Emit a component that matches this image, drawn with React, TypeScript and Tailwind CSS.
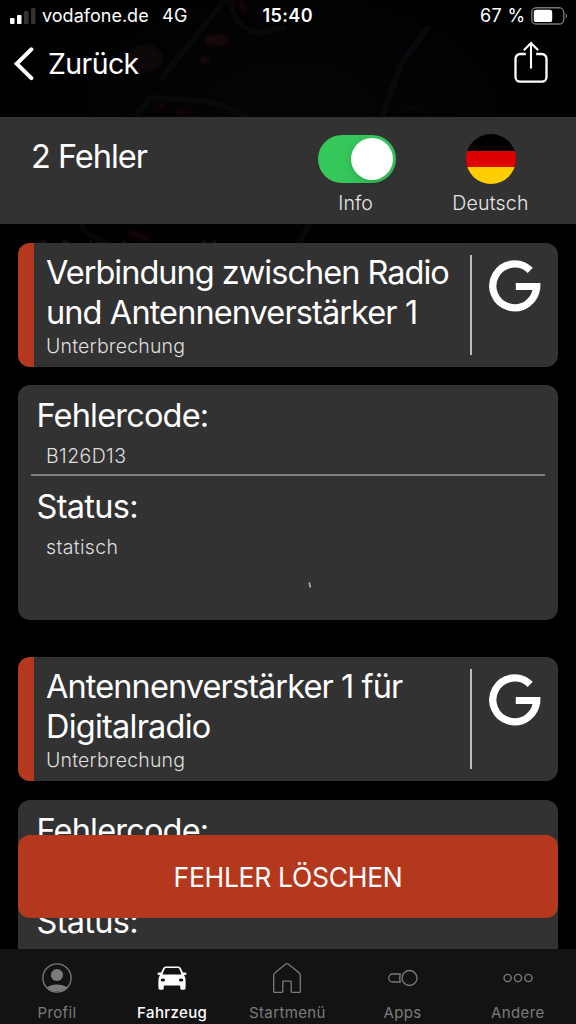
import type { ReactNode } from "react";

function Backdrop() {
  return (
    <svg className="absolute inset-0 h-[385px] w-full opacity-65" viewBox="0 0 576 385" fill="none" aria-hidden="true">
      <defs>
        <filter id="soft" x="-20%" y="-20%" width="140%" height="140%">
          <feGaussianBlur stdDeviation="2.6" />
        </filter>
        <radialGradient id="glow" cx="0.5" cy="0.5" r="0.5">
          <stop offset="0" stopColor="#08090b" />
          <stop offset="1" stopColor="#000000" />
        </radialGradient>
      </defs>
      <ellipse cx="290" cy="110" rx="340" ry="190" fill="url(#glow)" />
      <g filter="url(#soft)">
        <path d="M225 0L160 80" stroke="#121315" strokeWidth="4" />
        <path d="M136 117L150 97L212 102L250 117" stroke="#17181a" strokeWidth="3" />
        <path d="M230 0Q236 32 262 33L288 26" stroke="#141416" strokeWidth="3" />
        <path d="M430 25L402 62L382 117" stroke="#0f1013" strokeWidth="6" />
        <ellipse cx="146" cy="58" rx="17" ry="14" fill="#120b0d" />
        <ellipse cx="217" cy="40" rx="13" ry="6" fill="#26080d" />
        <ellipse cx="205" cy="60" rx="7" ry="4" fill="#1a070a" />
        <path d="M240 0L245 12" stroke="#2a080d" strokeWidth="5" />
        <path d="M155 105L167 107M179 111L190 114" stroke="#2a080b" strokeWidth="4" />
        <path d="M80 224Q90 240 110 243M310 224L298 243" stroke="#121315" strokeWidth="4" />
        <path d="M127 232L150 239" stroke="#22080d" strokeWidth="6" />
      </g>
      <path d="M396 117C400 104 424 104 430 117" stroke="#210a0d" />
      <path d="M39 242h7M62 242h7M90 242h2M123 242h3M202 242h3M213 242h3" stroke="#1b1b1c" strokeWidth="3" />
    </svg>
  );
}

function StatusBar() {
  return (
    <div className="flex h-8 items-center text-[18px] leading-8">
      <svg className="ml-[10px]" width="26" height="16" viewBox="0 0 26 16" fill="#fff">
        <rect x="0" y="10" width="4.5" height="6" rx="1" />
        <rect x="7" y="7" width="4.5" height="9" rx="1" />
        <rect x="14" y="3" width="4.5" height="13" rx="1" fill="#333334" />
        <rect x="21" y="0" width="4.5" height="16" rx="1" fill="#333334" />
      </svg>
      <span className="ml-[6px] w-[120px] tracking-[0.02px]">vodafone.de</span>
      <span className="w-[100.5px] tracking-[0.4px]">4G</span>
      <span className="w-[217.5px] font-semibold tracking-[0.4px]">15:40</span>
      <span className="w-[50.5px] whitespace-nowrap tracking-[0.4px]">67 %</span>
      <svg width="37" height="18" viewBox="0 0 37 18" fill="none">
        <rect x="0.8" y="0.8" width="32" height="16.2" rx="4.6" stroke="#767678" strokeWidth="1.4" />
        <rect x="2.8" y="2.8" width="18.4" height="12.2" rx="2.6" fill="#fff" />
        <path d="M34.8 6.3v5.4c1.8-.7 1.8-4.7 0-5.4" fill="#767678" />
      </svg>
    </div>
  );
}

function TitleBar() {
  return (
    <div className="flex h-[85px] items-start">
      <svg className="ml-[13px] mt-[15px]" width="22" height="34" viewBox="0 0 22 34" fill="none">
        <path d="M18.4 2.3L3.7 16.7L18.4 31.1" stroke="#fff" strokeWidth="4" strokeLinecap="round" strokeLinejoin="miter" />
      </svg>
      <span className="ml-[13px] mt-[12px] text-[28.5px] leading-10 tracking-[-0.62px]">Zurück</span>
      <svg className="ml-auto mr-[27px] mt-[9px]" width="36" height="44" viewBox="0 0 36 44" fill="none" stroke="#fff">
        <path d="M12.8 13H7.2a4.7 4.7 0 0 0-4.7 4.7v18.3a4.7 4.7 0 0 0 4.7 4.7h21.6a4.7 4.7 0 0 0 4.7-4.7V17.700a4.7 4.7 0 0 0-4.7-4.7h-5.6" strokeWidth="2.3" />
        <path d="M18 27.5V2.3M10.8 9.3L18 1.9L25.2 9.3" strokeWidth="2.1" />
      </svg>
    </div>
  );
}

function FilterBar() {
  return (
    <div className="flex h-[107px] bg-[#323232]">
      <h1 className="ml-[31px] mt-[20px] w-[287px] text-[32.5px] leading-10 tracking-[-1.03px]">2 Fehler</h1>
      <div className="mt-[18px] flex w-[78px] flex-col items-center">
        <button className="flex h-12 w-[78px] items-center justify-end rounded-full bg-[#35c75a] pr-[3px]" aria-label="Info">
          <span className="h-[42px] w-[42px] rounded-full bg-white shadow-[0_3px_8px_rgba(0,0,0,0.15)]" />
        </button>
        <span className="mt-[8px] -translate-x-[1.5px] text-[19.5px] font-light leading-6 text-[#e8e8e8]">Info</span>
      </div>
      <div className="ml-[44px] mt-[17px] flex w-[101px] flex-col items-center">
        <div className="flex h-[50px] w-[50px] flex-col overflow-hidden rounded-full">
          <div className="h-[17px] bg-black" />
          <div className="h-[16px] bg-[#dd0000]" />
          <div className="flex-1 bg-[#ffce00]" />
        </div>
        <span className="mt-[7px] text-[19.5px] font-light leading-6 tracking-[0.2px] text-[#e8e8e8]">Deutsch</span>
      </div>
    </div>
  );
}

function FaultCard({ children }: { children: ReactNode }) {
  return (
    <section className="mx-[18px] flex h-[124px] shrink-0 overflow-hidden rounded-[12px] bg-[#323232]">
      <div className="w-[16px] bg-[#b4381d]" />
      <div className="w-[436px] whitespace-nowrap pl-[12px] pt-[10px]">
        <h2 className="text-[32.5px] leading-10">{children}</h2>
        <p className="mt-px text-[19.5px] font-light leading-6 tracking-[0.18px] text-[#dedede]">Unterbrechung</p>
      </div>
      <div className="mt-[12px] h-[100px] w-[1.5px] bg-[#bdbdbd]" />
      <svg className="ml-[17.5px] mt-[17px] overflow-visible" width="52" height="52" viewBox="0 0 52 52" fill="none" stroke="#fff">
        <path d="M41.200 10.400A21.900 21.900 0 1 0 47.600 26V23" strokeWidth="7.300" />
        <path d="M26.800 26.500H51.200" strokeWidth="7" />
      </svg>
    </section>
  );
}

function DetailCard({ code, status }: { code?: string; status?: string }) {
  return (
    <section className="relative mx-[18px] h-[235px] shrink-0 rounded-[12px] bg-[#323232] pt-[10.5px]">
      <h3 className="ml-[18.5px] text-[32.5px] leading-[39px] tracking-[-0.82px]">Fehlercode:</h3>
      <p className="ml-[28px] mt-[9px] h-6 text-[19.5px] font-light leading-6 tracking-[0.4px] text-[#dedede]">{code}</p>
      <div className="mx-[13px] mt-[6.5px] h-[2px] bg-[#808080]" />
      <h3 className="ml-[18.5px] mt-[11px] text-[32.5px] leading-[39px] tracking-[-0.68px]">Status:</h3>
      {status && (
        <>
          <p className="ml-[28px] mt-[9px] text-[19.5px] font-light leading-6 tracking-[0.35px] text-[#dedede]">{status}</p>
          <svg className="absolute left-[288.5px] top-[196px]" width="6" height="8" viewBox="0 0 6 8">
            <path d="M2.2 1.500L3.400 6.500" stroke="#bcbcbc" strokeWidth="1.5" />
          </svg>
        </>
      )}
    </section>
  );
}

const ProfileIcon = () => (
  <svg width="30" height="30" viewBox="0 0 30 30" fill="none">
    <circle cx="15" cy="15" r="14.100" stroke="currentColor" strokeWidth="1.3" />
    <circle cx="15" cy="12" r="6.1" fill="currentColor" />
    <path d="M4.8 24.3C10 20.4 20 20.4 25.2 24.3C19.8 30 10.2 30 4.8 24.3Z" fill="currentColor" />
  </svg>
);

const CarIcon = () => (
  <svg width="30" height="30" viewBox="0 0 30 30" fill="none">
    <path
      fill="currentColor"
      fillRule="evenodd"
      d="M8.5 3.4h13a3 3 0 0 1 2.4 1.8l2 4.3h2.300q1.300 0 1.300 1.200t-1.600 1.400l-.9.2q1.600 2 1.600 4.500v8.200q0 1.700-1.600 1.700h-2.300q-1.500 0-1.500-1.600v-2.500H6.800v2.500q0 1.600-1.500 1.600H3q-1.600 0-1.600-1.700v-8.200q0-2.500 1.600-4.500l-.9-.2Q.5 11.900.5 10.700T1.800 9.500h2.300l2-4.300a3 3 0 0 1 2.400-1.800ZM9 4.900q-.9 0-1.300.9L5.600 11q-.2.400.3.400h18.200q.5 0 .3-.4l-2.100-5.200q-.4-.9-1.300-.9ZM3.600 17a2.300 1.500 0 1 0 4.600 0a2.300 1.500 0 1 0-4.600 0ZM21.800 17a2.300 1.500 0 1 0 4.600 0a2.300 1.500 0 1 0-4.600 0Z"
    />
  </svg>
);

const HomeIcon = () => (
  <svg width="30" height="32" viewBox="0 0 30 32" fill="none" stroke="currentColor" strokeWidth="1.3">
    <path d="M1.700 13.200Q1.700 11.800 2.800 11L13.800 2Q15 1.100 16.200 2L27.200 11Q28.300 11.800 28.300 13.200V29.700Q28.300 30.300 27.300 30.300H20Q19.200 30.300 19.200 29.500V20Q19.200 19.200 18.400 19.200H11.600Q10.800 19.200 10.800 20V29.500Q10.800 30.300 10 30.300H2.700Q1.700 30.300 1.700 29.700Z" />
  </svg>
);

const AppsIcon = () => (
  <svg width="30" height="30" viewBox="0 0 30 30" fill="none" stroke="currentColor" strokeWidth="1.3">
    <path d="M12.200 11H4.700a4 4 0 0 0 0 8h7.500q-1.100-4 0-8Z" />
    <circle cx="21.500" cy="15" r="7.500" />
  </svg>
);

const MoreIcon = () => (
  <svg width="30" height="30" viewBox="0 0 30 30" fill="none" stroke="currentColor" strokeWidth="1.4">
    <circle cx="4.600" cy="15" r="3.600" />
    <circle cx="15" cy="15" r="3.600" />
    <circle cx="25.400" cy="15" r="3.600" />
  </svg>
);

const tabs = [
  { label: "Profil", icon: <ProfileIcon /> },
  { label: "Fahrzeug", icon: <CarIcon />, active: true },
  { label: "Startmenü", icon: <HomeIcon /> },
  { label: "Apps", icon: <AppsIcon /> },
  { label: "Andere", icon: <MoreIcon /> },
];

function TabBar() {
  return (
    <nav className="relative grid h-[75px] grid-cols-5 bg-[#131313]">
      {tabs.map((tab) => (
        <div
          key={tab.label}
          className={`flex flex-col items-center pr-[1.2px] pt-[13px] text-[15px] tracking-[0.38px] ${
            tab.active ? "font-medium text-white" : "text-[#7b7b7b]"
          }`}
        >
          <div className="flex h-8 items-center">{tab.icon}</div>
          <span className="mt-[9px] leading-5">{tab.label}</span>
        </div>
      ))}
    </nav>
  );
}

export default function App() {
  return (
    <div className="relative flex h-[1024px] w-[576px] flex-col overflow-hidden bg-black font-['Inter',sans-serif] text-white">
      <Backdrop />
      <header className="relative">
        <StatusBar />
        <TitleBar />
        <FilterBar />
      </header>
      <main className="relative flex h-[725px] flex-col overflow-hidden pt-[19px]">
        <FaultCard>
          <span className="block tracking-[-1px]">Verbindung zwischen Radio</span>
          <span className="block tracking-[-0.9px]">und Antennenverstärker 1</span>
        </FaultCard>
        <div className="h-[18px] shrink-0" />
        <DetailCard code="B126D13" status="statisch" />
        <div className="h-[37px] shrink-0" />
        <FaultCard>
          <span className="block tracking-[-0.9px]">Antennenverstärker 1 für</span>
          <span className="block tracking-[-0.77px]">Digitalradio</span>
        </FaultCard>
        <div className="h-[19px] shrink-0" />
        <DetailCard />
        <button className="absolute bottom-[31px] left-[18px] right-[18px] h-[83px] rounded-[12px] bg-[#b4381d] pt-[3px] text-[26.5px] tracking-[-0.3px]">
          FEHLER LÖSCHEN
        </button>
      </main>
      <TabBar />
    </div>
  );
}
